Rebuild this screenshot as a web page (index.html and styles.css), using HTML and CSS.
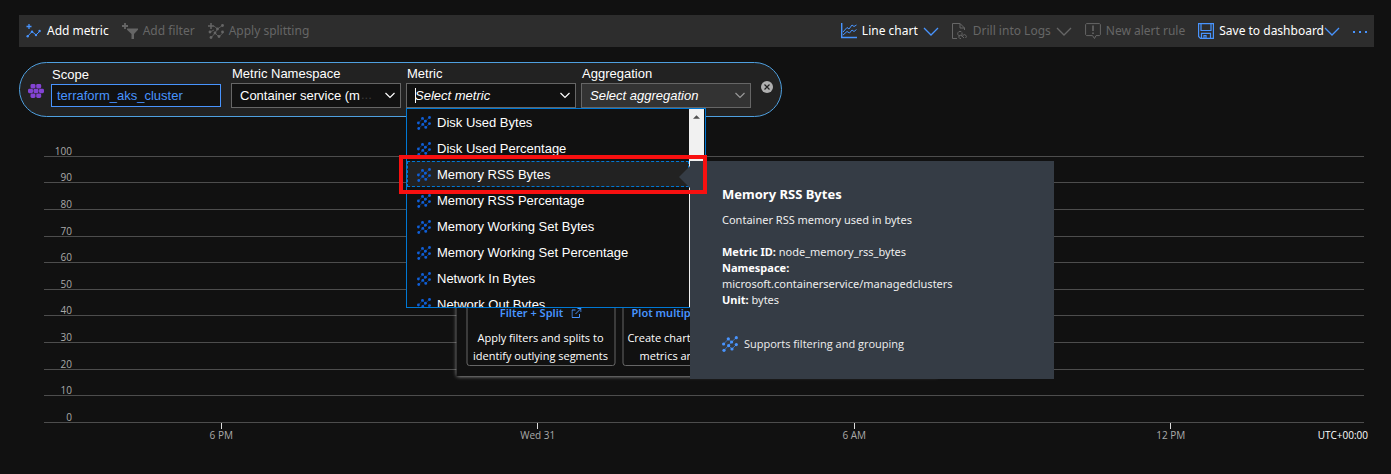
FILE: index.html
```html
<!DOCTYPE html>
<html lang="en">
<head>
<meta charset="utf-8">
<title>Metrics</title>
<link rel="stylesheet" href="styles.css">
</head>
<body>
<svg class="sprite" aria-hidden="true">
  <symbol id="chevron" viewBox="0 0 16 10"><path d="M1 1l7 7 7-7" fill="none" stroke="currentColor" stroke-width="1.3"/></symbol>
  <symbol id="chevron-small" viewBox="0 0 10 7"><path d="M.5 1l4.500 4.500L9.500 1" fill="none" stroke="currentColor" stroke-width="1.2"/></symbol>
  <symbol id="external" viewBox="0 0 10 10"><path d="M4 2H.5v7.500H8V6M4 6l5.500-5.500M6 .5h3.500V4" fill="none" stroke="currentColor"/></symbol>
  <symbol id="split" viewBox="0 0 16 16">
    <path d="M1.500 8L6.500 3L9.500 6L14.500 1.500M2 14.500L6.500 9.500L10 13L14.500 8.500M9.500 6L6.500 9.500" fill="none" stroke="currentColor" stroke-width="1" opacity=".6"/>
    <g fill="currentColor"><circle cx="1.600" cy="8" r="1.600"/><circle cx="6.300" cy="2.800" r="1.600"/><circle cx="9.600" cy="6" r="1.600"/><circle cx="14.300" cy="1.700" r="1.600"/><circle cx="2" cy="14.300" r="1.600"/><circle cx="6.600" cy="9.600" r="1.600"/><circle cx="10" cy="13" r="1.600"/><circle cx="14.300" cy="8.600" r="1.600"/></g>
  </symbol>
</svg>

<header class="toolbar">
  <button class="command" type="button">
    <svg class="icon icon--accent" viewBox="0 0 16 16"><path d="M3 1v5M.5 3.500h5" stroke="currentColor" stroke-width="1.300"/><path d="M1.500 13.500l4.500-5 4 3.500L14 8" fill="none" stroke="currentColor"/><g fill="currentColor"><circle cx="1.700" cy="13.300" r="1.200"/><circle cx="6" cy="8.800" r="1.200"/><circle cx="10" cy="12" r="1.200"/><circle cx="13.600" cy="8" r="1.200"/></g></svg>
    Add metric
  </button>
  <button class="command" type="button" disabled>
    <svg class="icon" viewBox="0 0 16 16"><path d="M3 0v6M0 3h6" stroke="currentColor" stroke-width="1.800"/><path d="M5 5.500h11v1.200l-4 4.300v5H9.500v-5L5 6.700z" fill="currentColor"/></svg>
    Add filter
  </button>
  <button class="command" type="button" disabled>
    <svg class="icon" viewBox="0 0 16 16"><path d="M3 0v6M0 3h6" stroke="currentColor" stroke-width="1.500"/><path d="M6 3l3.500 3L15 2M2 9l4-2M3 15l4-5 4 4 4.500-5M9.500 6L7 10" fill="none" stroke="currentColor" stroke-width=".8"/><g fill="currentColor"><circle cx="9.500" cy="6" r="1.400"/><circle cx="14.500" cy="2.500" r="1.400"/><circle cx="2" cy="9" r="1.400"/><circle cx="3" cy="14.500" r="1.400"/><circle cx="7" cy="10" r="1.400"/><circle cx="11" cy="13.500" r="1.400"/><circle cx="14.500" cy="9" r="1.400"/></g></svg>
    Apply splitting
  </button>
  <span class="toolbar__spacer"></span>
  <button class="command" type="button">
    <svg class="icon icon--accent" viewBox="0 0 16 16"><g fill="none" stroke="currentColor"><path d="M.7 0v15" stroke-width="1.400"/><path d="M0 14.500h16" stroke-width="1.500"/><path d="M2 9l4-4.500 2 1.500 3-4 2 1.500L15.500 2M2 12l4-3.500 2.500 1.500L11 7l2 1.500 2.500-2"/></g></svg>
    Line chart
    <svg class="chevron icon--accent"><use href="#chevron"/></svg>
  </button>
  <button class="command" type="button" disabled>
    <svg class="icon" viewBox="0 0 16 16"><g fill="none" stroke="currentColor"><path d="M5 15.500H.5V.5H8l4.500 4.500v2M8 .5V5h4.500"/><path d="M8 13a2.300 2.300 0 1 1 2-3.500M10 10v3.500M11 12.500a1.800 1.800 0 1 1 2.500 2.500M9 15.500a1.700 1.700 0 1 1 1-2.500l2 2"/></g></svg>
    Drill into Logs
    <svg class="chevron"><use href="#chevron"/></svg>
  </button>
  <button class="command" type="button" disabled>
    <svg class="icon" viewBox="0 0 16 16"><path d="M1.500.6h13l.9 1v10l-.9 1H11L9.500 15.500 7.500 12.600h-6l-.9-1v-10z" fill="none" stroke="currentColor"/><path d="M8 2.500v5.500M8 9.500v1.600" stroke="currentColor" stroke-width="1.600"/></svg>
    New alert rule
  </button>
  <button class="command" type="button">
    <svg class="icon icon--accent" viewBox="0 0 16 16"><g fill="none" stroke="currentColor" stroke-width="1.200"><path d="M.6.600h14.800v14.800H2.500L.6 13.500zM3 .6v6.900h10V.6M3.500 15.400v-5h9v5M6 15v-2.500h2V15"/></g></svg>
    <span class="command__joined">Save to dashboard <svg class="chevron icon--accent"><use href="#chevron"/></svg></span>
  </button>
  <button class="command command--more" type="button" aria-label="More commands">
    <svg class="dots" viewBox="0 0 14 2"><path d="M0 0h2v2H0zM6 0h2v2H6zM12 0h2v2h-2z" fill="currentColor"/></svg>
  </button>
</header>

<main>
  <form class="query">
    <svg class="query__resource" viewBox="0 0 16 14" aria-hidden="true"><g fill="#8343d3"><rect x="2.500" width="5" height="4.400" rx="1.400"/><rect x="8.200" width="5" height="4.400" rx="1.400"/><rect y="4.800" width="5" height="4.400" rx="1.400"/><rect x="5.500" y="4.800" width="5" height="4.400" rx="1.400"/><rect x="11" y="4.800" width="5" height="4.400" rx="1.400"/><rect x="2.500" y="9.600" width="5" height="4.400" rx="1.400"/><rect x="8.200" y="9.600" width="5" height="4.400" rx="1.400"/></g></svg>
    <div class="field field--scope">
      <label for="scope">Scope</label>
      <button id="scope" class="scope" type="button">terraform_aks_cluster</button>
    </div>
    <div class="field">
      <label for="namespace">Metric Namespace</label>
      <div class="combo">
        <select id="namespace" class="control"><option>Container service (m</option></select>
        <span class="combo__more" aria-hidden="true">...</span>
        <svg class="combo__chevron"><use href="#chevron-small"/></svg>
      </div>
    </div>
    <div class="field">
      <label for="metric">Metric</label>
      <div class="combo">
        <input id="metric" class="control" type="text" role="combobox" aria-expanded="true" aria-controls="metrics" placeholder="Select metric">
        <span class="combo__caret"></span>
        <svg class="combo__chevron"><use href="#chevron-small"/></svg>
      </div>
      <div class="popup">
        <div class="listbox">
          <ul id="metrics" class="listbox__items" role="listbox">
            <li class="option" role="option"><svg><use href="#split"/></svg>Disk Used Bytes</li>
            <li class="option" role="option"><svg><use href="#split"/></svg>Disk Used Percentage</li>
            <li class="option option--active" role="option" aria-selected="true"><svg><use href="#split"/></svg>Memory RSS Bytes</li>
            <li class="option" role="option"><svg><use href="#split"/></svg>Memory RSS Percentage</li>
            <li class="option" role="option"><svg><use href="#split"/></svg>Memory Working Set Bytes</li>
            <li class="option" role="option"><svg><use href="#split"/></svg>Memory Working Set Percentage</li>
            <li class="option" role="option"><svg><use href="#split"/></svg>Network In Bytes</li>
            <li class="option" role="option"><svg><use href="#split"/></svg>Network Out Bytes</li>
          </ul>
          <div class="scrollbar"><svg viewBox="0 0 8 4"><path d="M0 4l4-4 4 4z" fill="#505050"/></svg></div>
        </div>
        <aside class="tip" role="tooltip">
          <h2>Memory RSS Bytes</h2>
          <p>Container RSS memory used in bytes</p>
          <p class="tip__facts"><b>Metric ID:</b> node_memory_rss_bytes<br><b>Namespace:</b><br>microsoft.containerservice/managedclusters<br><b>Unit:</b> bytes</p>
          <p class="tip__support"><svg><use href="#split"/></svg>Supports filtering and grouping</p>
        </aside>
        <div class="highlight"></div>
      </div>
    </div>
    <div class="field">
      <label for="aggregation">Aggregation</label>
      <div class="combo combo--disabled">
        <select id="aggregation" class="control" disabled><option>Select aggregation</option></select>
        <svg class="combo__chevron"><use href="#chevron-small"/></svg>
      </div>
    </div>
    <button class="remove" type="button" aria-label="Remove metric"><svg viewBox="0 0 12 12"><circle cx="6" cy="6" r="6" fill="#b0b0b0"/><path d="M3.500 3.500l5 5M8.500 3.500l-5 5" stroke="#222" stroke-width="1.200"/></svg></button>
  </form>

  <section class="chart">
    <ol class="grid">
      <li>100</li><li>90</li><li>80</li><li>70</li><li>60</li><li>50</li><li>40</li><li>30</li><li>20</li><li>10</li><li>0</li>
    </ol>
    <div class="axis">
      <span class="tick">6 PM</span><span class="tick">Wed 31</span><span class="tick">6 AM</span><span class="tick">12 PM</span>
      <span class="zone">UTC+00:00</span>
    </div>
    <div class="intro">
      <article class="hint">
        <a href="#">Filter + Split <svg><use href="#external"/></svg></a>
        <p>Apply filters and splits to<br>identify outlying segments</p>
      </article>
      <article class="hint">
        <a href="#">Plot multiple metrics <svg><use href="#external"/></svg></a>
        <p>Create charts with multiple<br>metrics and resources</p>
      </article>
      <article class="hint"></article>
    </div>
  </section>
</main>
</body>
</html>
```

FILE: styles.css
```css
* { box-sizing: border-box; }

body {
  margin: 0;
  padding: 15px 17px 0 19px;
  background: #111;
  color: #fff;
  font: 12px/18px "Noto Sans", sans-serif;
}

button, input, select { font: inherit; color: inherit; }
button { padding: 0; border: 0; background: none; }
h2, p, ol, ul { margin: 0; padding: 0; }
ol, ul { list-style: none; }
svg { flex: none; display: block; }
.sprite { position: absolute; width: 0; height: 0; }

/* Command bar */
.toolbar {
  display: flex;
  align-items: center;
  gap: 13px;
  height: 32px;
  padding: 0 7px;
  background: #2d2d2d;
}
.toolbar__spacer { flex: 1; }
.command { display: flex; align-items: center; gap: 5px; white-space: nowrap; }
.command:disabled { color: #666; }
.command__joined { display: flex; align-items: center; }
.icon { width: 16px; height: 16px; }
.icon--accent, .command--more { color: #4894fe; }
.chevron { width: 16px; height: 10px; margin-top: 2px; }
.dots { width: 14px; height: 2px; margin-top: 2px; }

/* Metric query row */
.query {
  position: relative;
  z-index: 1;
  display: flex;
  align-items: flex-start;
  width: fit-content;
  margin-top: 15px;
  padding: 2px 8px 8px;
  border: 1px solid #4fa0e0;
  border-radius: 28px;
  background: #222;
  font-family: "Liberation Sans", sans-serif;
  font-size: 13px;
}
.query__resource { width: 16px; height: 14px; align-self: center; margin: 8px 7px 0 0; }
.field { position: relative; width: 170px; margin-right: 5px; }
.field label { display: block; padding-left: 1px; }
.field--scope { padding-top: 1px; margin-right: 10px; }
.scope {
  display: block;
  width: 100%;
  height: 23px;
  padding: 0 5px;
  border: 1px solid #4894fe;
  background: #111;
  color: #4894fe;
  text-align: left;
}
.combo { position: relative; }
.control {
  display: block;
  appearance: none;
  width: 100%;
  height: 25px;
  padding: 0 24px 0 8px;
  border: 1px solid #666;
  border-radius: 0;
  outline: 0;
  background: #111;
}
.control::placeholder { color: #fff; font-style: italic; opacity: 1; }
.combo--disabled .control { background: #333; color: #fff; font-style: italic; opacity: 1; }
.combo__chevron { position: absolute; right: 6px; top: 9px; width: 10px; height: 7px; }
.combo--disabled .combo__chevron { color: #999; }
.combo__more { position: absolute; left: 130px; top: 3px; color: #3c3c3c; }
.combo__caret { position: absolute; left: 9px; top: 5px; width: 1px; height: 15px; background: #fff; }
.remove { align-self: flex-start; margin: 16px 0 0 5px; }
.remove svg { width: 12px; height: 12px; }

/* Metric drop-down */
.popup { position: absolute; top: 100%; left: 0; width: 300px; }
.listbox {
  display: flex;
  height: 200px;
  padding-right: 1px;
  overflow: hidden;
  border: 1px solid #0078d4;
  background: #111;
}
.listbox__items { flex: 1; }
.option {
  display: flex;
  align-items: center;
  gap: 6px;
  height: 26px;
  padding: 1px 0 0 9px;
  border: 1px solid transparent;
}
.option svg { width: 14px; height: 14px; color: #0f5fd8; }
.option--active { border: 1px dashed #0078d4; background: #222; }
.scrollbar { width: 15px; padding: 6px 4px; background: #f1f1f1; }
.scrollbar svg { width: 7px; height: 4px; }

.tip {
  position: absolute;
  top: 53px;
  left: 284px;
  width: 364px;
  padding: 24px 32px 26px;
  background: #353c45;
  color: #eee;
  font: 11px/16px "Noto Sans", sans-serif;
}
.tip::before {
  content: "";
  position: absolute;
  top: 5px;
  left: -11px;
  border: 11px solid transparent;
  border-left: 0;
  border-right-color: #353c45;
}
.tip h2 { margin-bottom: 9px; font-size: 13px; line-height: 18px; color: #fff; }
.tip b { color: #fff; }
.tip__facts { margin: 16px 0 27px; }
.tip__support { display: flex; align-items: center; gap: 6px; font-family: "Open Sans", sans-serif; line-height: 18px; }
.tip__support svg { width: 16px; height: 16px; color: #4894fe; }
.highlight {
  position: absolute;
  top: 47px;
  left: -7px;
  width: 308px;
  height: 39px;
  border: 4px solid #f81010;
}

/* Chart */
.chart {
  position: relative;
  margin-top: 13px;
  color: #aaa;
  font: 10px/12px "Open Sans", sans-serif;
}
.grid { display: flex; flex-direction: column; height: 293px; margin: 0 10px 0 25px; line-height: 10px; }
.grid li {
  flex: 1;
  display: flex;
  align-items: flex-end;
  justify-content: flex-end;
  width: 100%;
  padding-right: calc(100% - 28px);
  border-bottom: 1px solid #4d4d4d;
}
.axis { display: grid; grid-template-columns: repeat(4, 1fr) 39px; padding: 0 6px 0 44px; }
.tick { display: flex; flex-direction: column; align-items: center; }
.tick::before { content: ""; width: 1px; height: 6px; background: #ddd; }
.zone { justify-self: end; padding-top: 6px; color: #fff; white-space: nowrap; }

.intro {
  position: absolute;
  left: 50%;
  bottom: 65px;
  display: grid;
  grid-template-columns: repeat(3, 149px);
  gap: 7px;
  padding: 10px;
  transform: translateX(-50%);
  background: #111;
  box-shadow: 0 0 4px #ccc;
  color: #fff;
  font-size: 11px;
  line-height: 18px;
}
.hint {
  height: 90px;
  padding: 27px 4px 0;
  border: 1px solid #666;
  border-radius: 3px;
  text-align: center;
  white-space: nowrap;
}
.hint a {
  display: flex;
  align-items: center;
  justify-content: center;
  gap: 8px;
  margin-bottom: 7px;
  color: #4894fe;
  font-family: "Noto Sans", sans-serif;
  font-weight: 600;
  text-decoration: none;
}
.hint a svg { width: 10px; height: 10px; }
```
